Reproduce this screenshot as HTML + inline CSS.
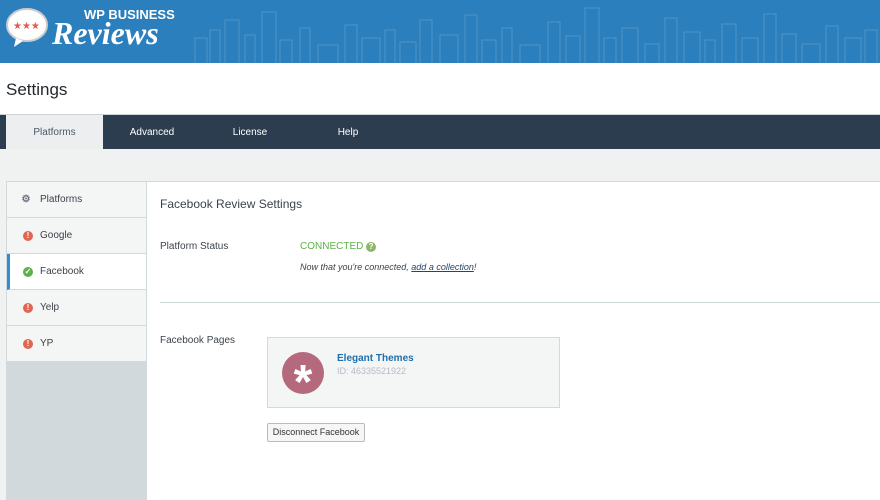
<!DOCTYPE html>
<html><head><meta charset="utf-8"><style>
*{margin:0;padding:0;box-sizing:border-box}
body{width:880px;height:500px;overflow:hidden;background:#f0f1f1;font-family:"Liberation Sans",sans-serif;position:relative}
.hdr{position:absolute;left:0;top:0;width:880px;height:63px;background:#2b7fbc;overflow:hidden}
.title{position:absolute;left:0;top:63px;width:880px;height:51px;background:#fff}
.title span{position:absolute;left:6px;top:17px;font-size:17px;color:#23282d}
.nav{position:absolute;left:0;top:114px;width:880px;height:35px;background:#2c3d4f;border-top:1px solid #cdd3d6}
.nav div{position:absolute;top:0;height:34px;line-height:36px;font-size:10px;color:#fff;text-align:center}
.nav .act{background:#eceeef;color:#4a5a6a}
.side{position:absolute;left:6px;top:181px;width:140px;height:319px;background:#d2d9dc;border-top:1px solid #d2d9dc;border-left:1px solid #d2d9dc}
.item{height:36px;border-bottom:1px solid #d2d9dc;background:#f4f5f5;font-size:10px;color:#3c434a;line-height:36px;padding-left:33px;position:relative}
.item.on{background:#fff;border-left:3px solid #2b8fd0;padding-left:30px}
.ic{position:absolute;left:16px;top:13px;width:10px;height:10px;border-radius:50%;background:#e06552;color:#fff;font-size:8px;line-height:10px;text-align:center;font-weight:bold}
.on .ic{left:13px;background:#5eb14a}
.main{position:absolute;left:146px;top:181px;width:734px;height:319px;background:#fff;border-left:1px solid #d2d9dc;border-top:1px solid #d2d9dc}
.t{position:absolute;font-size:10px;color:#3c434a}
</style></head><body>
<div class="hdr">
<svg width="880" height="63" style="position:absolute;left:0;top:0">
<g fill="none" stroke="#4f95c8" stroke-width="1">
<path d="M195 63V38h12v25M210 63V30h10v33M225 63V20h14v43M245 63V35h10v28M262 63V12h14v51M280 63V40h12v23M300 63V28h10v35M318 63V45h20v18M345 63V25h12v38M362 63V38h18v25M385 63V30h10v33M400 63V42h16v21M420 63V20h12v43M440 63V35h18v28M465 63V15h12v48M482 63V40h14v23M502 63V28h10v35M520 63V45h20v18M548 63V22h12v41M566 63V36h14v27M585 63V8h14v55M604 63V38h12v25M622 63V28h16v35M645 63V44h14v19M665 63V18h12v45M684 63V32h16v31M705 63V40h10v23M722 63V24h14v39M742 63V38h16v25M764 63V14h12v49M782 63V34h14v29M802 63V44h18v19M826 63V26h12v37M845 63V38h16v25M865 63V30h12v33"/>
</g>
<ellipse cx="27" cy="25" rx="20" ry="16" fill="#fff" stroke="#ccc" stroke-width="2"/>
<path d="M16 38l-2 9 9-6z" fill="#fff"/>
<text x="13" y="29" fill="#e05a4a" font-size="10" font-family="Liberation Sans">★★★</text>
<text x="84" y="19" fill="#fff" font-size="13" font-weight="bold" font-family="Liberation Sans">WP BUSINESS</text>
<text x="52" y="44" fill="#fff" font-size="32" font-style="italic" font-weight="bold" font-family="Liberation Serif">Reviews</text>
</svg>
</div>
<div class="title"><span>Settings</span></div>
<div class="nav">
<div class="act" style="left:6px;width:97px">Platforms</div>
<div style="left:103px;width:98px">Advanced</div>
<div style="left:201px;width:98px">License</div>
<div style="left:299px;width:98px">Help</div>
</div>
<div class="side">
<div class="item"><span class="ic" style="background:none;color:#6a7280;font-size:10px;left:14px">⚙</span>Platforms</div>
<div class="item"><span class="ic">!</span>Google</div>
<div class="item on"><span class="ic">✓</span>Facebook</div>
<div class="item"><span class="ic">!</span>Yelp</div>
<div class="item"><span class="ic">!</span>YP</div>
</div>
<div class="main">
<div class="t" style="left:13px;top:15px;font-size:12px">Facebook Review Settings</div>
<div class="t" style="left:13px;top:59px">Platform Status</div>
<div class="t" style="left:153px;top:59px;color:#5eb14a">CONNECTED <span style="display:inline-block;width:10px;height:10px;border-radius:50%;background:#8fb56a;color:#fff;font-size:8px;text-align:center;line-height:10px;font-weight:bold">?</span></div>
<div class="t" style="left:153px;top:80px;font-style:italic;font-size:9px">Now that you're connected, <u style="color:#23466e">add a collection</u>!</div>
<div style="position:absolute;left:13px;top:120px;width:721px;height:1px;background:#ccd6d8"></div>
<div class="t" style="left:13px;top:153px">Facebook Pages</div>
<div style="position:absolute;left:120px;top:155px;width:293px;height:71px;background:#f4f5f5;border:1px solid #d6d9da">
<div style="position:absolute;left:14px;top:14px;width:42px;height:42px;border-radius:50%;background:#b5697c;color:#fff;font-size:48px;font-weight:bold;text-align:center;line-height:62px">*</div>
<div style="position:absolute;left:69px;top:15px;font-size:10px;color:#1d6fae;font-weight:bold">Elegant Themes</div>
<div style="position:absolute;left:69px;top:28px;font-size:9px;color:#b4bcc2">ID: 46335521922</div>
</div>
<div style="position:absolute;left:120px;top:241px;width:98px;height:19px;border:1px solid #bbb;border-radius:2px;background:#f6f6f6;font-size:9px;color:#333;text-align:center;line-height:17px">Disconnect Facebook</div>
</div>
</body></html>
